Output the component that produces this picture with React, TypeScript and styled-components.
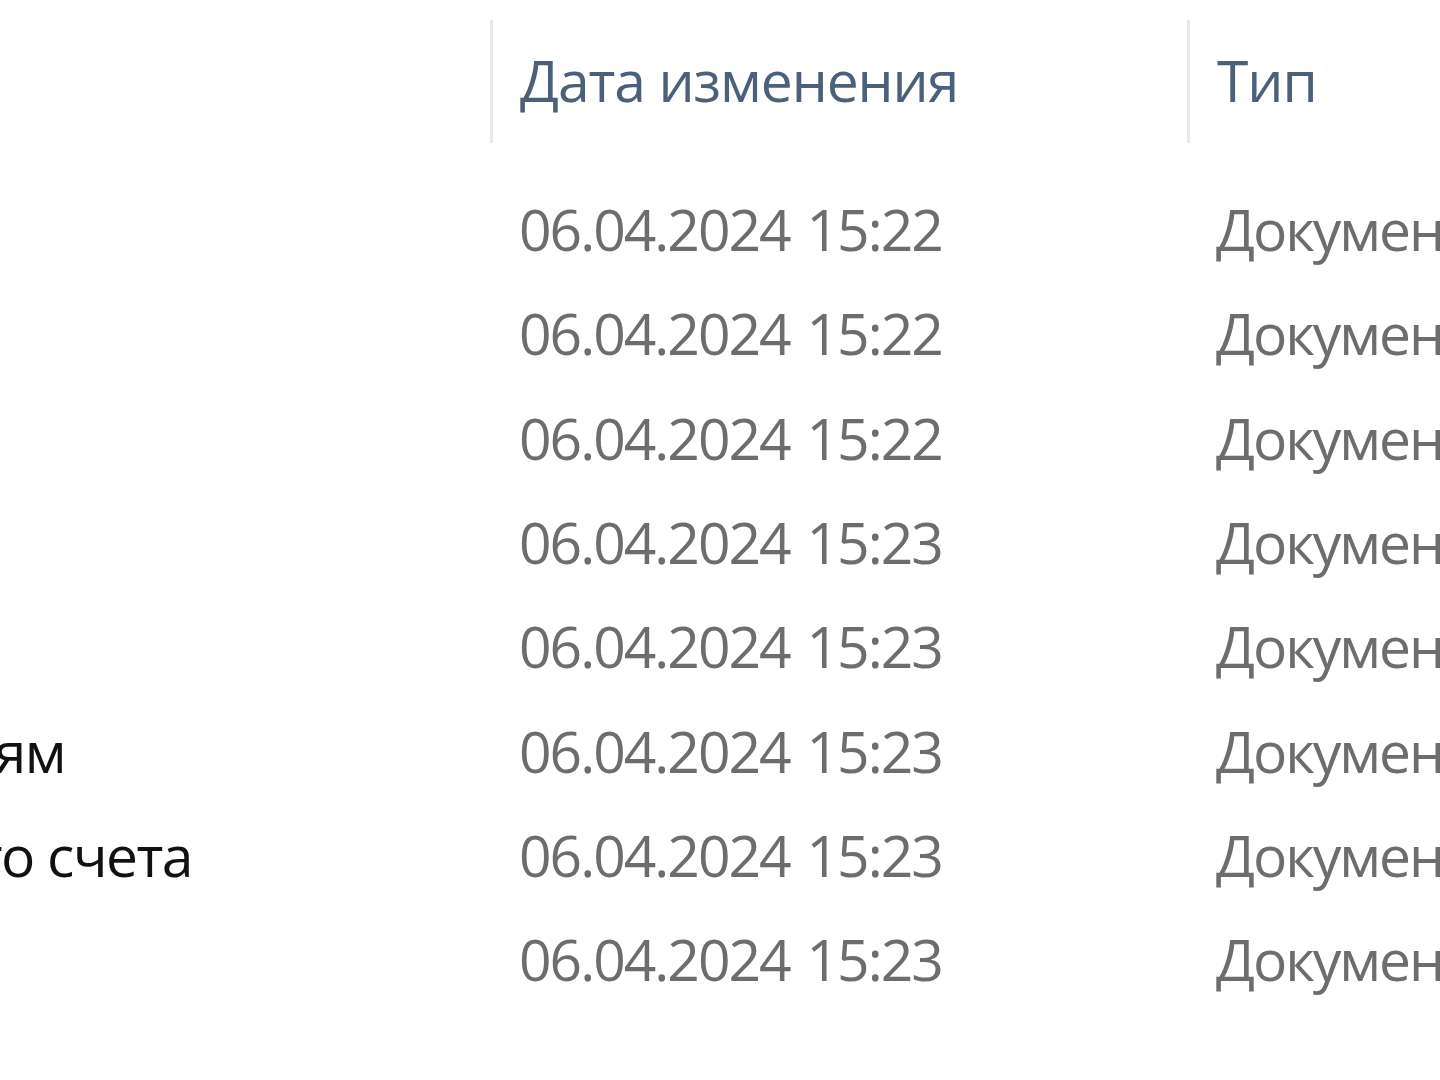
import styled, { createGlobalStyle } from "styled-components";

const GlobalStyle = createGlobalStyle`
  html, body {
    margin: 0;
    padding: 0;
    background: #ffffff;
    overflow: hidden;
  }
  body {
    font-family: "Open Sans", "Noto Sans", "DejaVu Sans", sans-serif;
  }
`;

interface FileRow {
  name: string;
  tail: number;
  modified: string;
  type: string;
}

// the list is scrolled to the right: only the ends of the longest names show
const files: FileRow[] = [
  { name: "", tail: 0, modified: "06.04.2024 15:22", type: "Документ Microsoft Word" },
  { name: "", tail: 0, modified: "06.04.2024 15:22", type: "Документ Microsoft Word" },
  { name: "", tail: 0, modified: "06.04.2024 15:22", type: "Документ Microsoft Word" },
  { name: "", tail: 0, modified: "06.04.2024 15:23", type: "Документ Microsoft Word" },
  { name: "", tail: 0, modified: "06.04.2024 15:23", type: "Документ Microsoft Word" },
  { name: "Отчет по операциям", tail: 425, modified: "06.04.2024 15:23", type: "Документ Microsoft Word" },
  { name: "Выписка с банковского счета", tail: 298, modified: "06.04.2024 15:23", type: "Документ Microsoft Word" },
  { name: "", tail: 0, modified: "06.04.2024 15:23", type: "Документ Microsoft Word" },
];

const View = styled.div`
  width: 1440px;
  height: 1080px;
  overflow: hidden;
  background: #ffffff;
`;

const Columns = styled.div`
  display: grid;
  grid-template-columns: 490px 697px 1fr;
`;

const HeaderRow = styled(Columns)`
  height: 177px;
  align-items: start;
`;

const HeaderCell = styled.div<{ $divider?: boolean }>`
  height: 123px;
  margin-top: 20px;
  display: flex;
  align-items: center;
  padding-left: 27px;
  padding-bottom: 4px;
  box-sizing: border-box;
  border-left: ${(p) => (p.$divider ? "3px solid #e8e8e8" : "none")};
  color: #4c607a;
  font-size: 57px;
  letter-spacing: -1.1px;
  white-space: nowrap;
`;

const Row = styled(Columns)`
  height: 104.3px;
  align-items: center;
`;

const NameCell = styled.div<{ $tail: number }>`
  display: flex;
  justify-content: flex-end;
  overflow: hidden;
  padding-right: ${(p) => p.$tail}px;
  color: #111111;
  font-size: 57px;
  letter-spacing: -1.5px;
  white-space: nowrap;
`;

const InfoCell = styled.div`
  padding-left: 29px;
  color: #6d6d6d;
  font-size: 57px;
  letter-spacing: -2px;
  word-spacing: 4px;
  white-space: nowrap;
  overflow: hidden;
`;

export default function App() {
  return (
    <>
      <GlobalStyle />
      <View>
        <HeaderRow>
          <div />
          <HeaderCell $divider>Дата изменения</HeaderCell>
          <HeaderCell $divider>Тип</HeaderCell>
        </HeaderRow>
        {files.map((f, i) => (
          <Row key={i}>
            <NameCell $tail={f.tail}>{f.name}</NameCell>
            <InfoCell>{f.modified}</InfoCell>
            <InfoCell>{f.type}</InfoCell>
          </Row>
        ))}
      </View>
    </>
  );
}
